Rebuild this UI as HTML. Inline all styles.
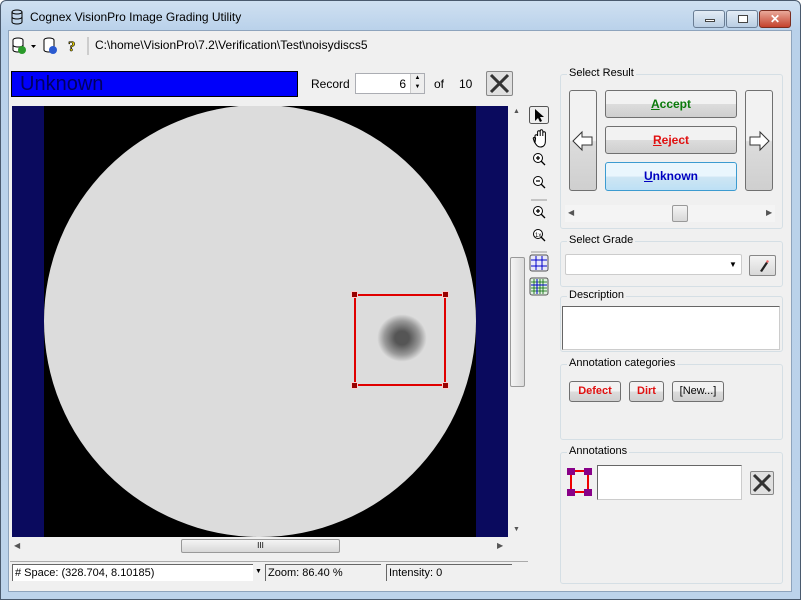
<!DOCTYPE html>
<html><head><meta charset="utf-8"><style>
*{box-sizing:border-box;margin:0;padding:0}
body{width:807px;height:604px;overflow:hidden;background:#fff;font-family:"Liberation Sans",sans-serif;font-size:11px;color:#000;position:relative}
.abs{position:absolute}
.frame{left:0;top:0;width:801px;height:600px;background:linear-gradient(#cfe0f1,#b9d1ea 30px,#bcd3eb);border:1px solid #4a5a6e;border-radius:6px 6px 0 0}
.client{left:8px;top:30px;width:784px;height:562px;background:#f0f0f0;border:1px solid #8ea4bd}
.grp{position:absolute;border:1px solid #d5dfe5;border-radius:3px}
.grp .lab{position:absolute;left:6px;top:-8px;background:#f0f0f0;padding:0 2px;font-size:11px}
.btn{position:absolute;border:1px solid #707070;border-radius:3px;background:linear-gradient(#f2f2f2 50%,#dcdcdc 51%,#cfcfcf);text-align:center;font-weight:bold;font-size:12px}
.wbtn{position:absolute;top:10px;height:18px;border:1px solid #6a7d94;border-radius:3px;background:linear-gradient(#e3ecf6,#b9cde3)}
</style></head><body>
<div class="abs frame"></div>
<svg class="abs" style="left:10px;top:9px" width="14" height="16"><ellipse cx="7" cy="3" rx="5" ry="2" fill="none" stroke="#000"/><path d="M2 3v10M12 3v10M2 8a5 2 0 0 0 10 0M2 13a5 2 0 0 0 10 0" fill="none" stroke="#000"/></svg>
<div class="abs" style="left:30px;top:10px;font-size:12px">Cognex VisionPro Image Grading Utility</div>
<div class="wbtn" style="left:693px;width:32px"><div class="abs" style="left:11px;top:8px;width:10px;height:3px;background:#fff;border:1px solid #444"></div></div>
<div class="wbtn" style="left:726px;width:32px"><div class="abs" style="left:11px;top:4px;width:10px;height:8px;border:1px solid #444;background:#fff"></div></div>
<div class="wbtn" style="left:759px;width:32px;background:linear-gradient(#e9a99a,#c4412c);border-color:#7a2d20;color:#fff;font-weight:bold;font-size:12px;text-align:center;line-height:16px">✕</div>
<div class="abs client"></div>
<!-- toolbar -->
<svg class="abs" style="left:11px;top:37px" width="80" height="18">
<ellipse cx="7" cy="3" rx="5" ry="2" fill="#fff" stroke="#000"/><path d="M2 3v10a5 2 0 0 0 10 0V3" fill="#fff" stroke="#000"/><path d="M2 8a5 2 0 0 0 10 0" fill="none" stroke="#000"/><circle cx="11" cy="13" r="4" fill="#2a9a2a"/>
<path d="M20 8h5l-2.5 3z" fill="#000"/>
<ellipse cx="38" cy="3" rx="5" ry="2" fill="#fff" stroke="#000"/><path d="M33 3v10a5 2 0 0 0 10 0V3" fill="#fff" stroke="#000"/><circle cx="42" cy="13" r="4" fill="#2a5ad0"/>
<text x="57" y="14" font-size="15" font-weight="bold" fill="#e8d000" stroke="#000" stroke-width=".6" font-family="Liberation Serif">?</text>
<line x1="77" y1="0" x2="77" y2="18" stroke="#aaa"/></svg>
<div class="abs" style="left:95px;top:38px;font-size:12px">C:\home\VisionPro\7.2\Verification\Test\noisydiscs5</div>
<!-- unknown bar -->
<div class="abs" style="left:11px;top:71px;width:287px;height:26px;background:#0000fa;border:1px solid #000;font-size:20px;color:#000060;padding-left:8px;line-height:24px">Unknown</div>
<div class="abs" style="left:311px;top:77px;font-size:12px">Record</div>
<div class="abs" style="left:355px;top:73px;width:70px;height:21px;background:#fff;border:1px solid #abadb3;text-align:right;padding:3px 18px 0 0;font-size:12px">6</div>
<div class="abs" style="left:410px;top:74px;width:14px;height:19px;background:#eee;border-left:1px solid #ccc;font-size:6px;text-align:center;line-height:9px">▲<br>▼</div>
<div class="abs" style="left:434px;top:77px;font-size:12px">of</div>
<div class="abs" style="left:459px;top:77px;font-size:12px">10</div>
<div class="abs" style="left:486px;top:71px;width:27px;height:25px;border:1px solid #888;border-radius:2px;background:#e0e0e0"><svg width="25" height="23"><path d="M4 3L21 20M21 3L4 20" stroke="#333" stroke-width="3"/></svg></div>
<!-- image -->
<div class="abs" style="left:12px;top:106px;width:496px;height:431px;background:#000;overflow:hidden">
<div class="abs" style="left:0;top:0;width:32px;height:431px;background:#0a0a5e"></div>
<div class="abs" style="left:464px;top:0;width:32px;height:431px;background:#0a0a5e"></div>
<div class="abs" style="left:32px;top:-1px;width:432px;height:432px;border-radius:50%;background:#dcdcdc"></div>
<div class="abs" style="left:342px;top:188px;width:92px;height:92px;border:2px solid #e00000"></div>
<div class="abs" style="left:365px;top:208px;width:50px;height:48px;border-radius:50%;background:radial-gradient(#555 20%,#999 50%,#dcdcdc 70%)"></div>
<div class="abs" style="left:339px;top:185px;width:7px;height:7px;background:#900;border:1px solid #fcc"></div>
<div class="abs" style="left:430px;top:185px;width:7px;height:7px;background:#900;border:1px solid #fcc"></div>
<div class="abs" style="left:339px;top:276px;width:7px;height:7px;background:#900;border:1px solid #fcc"></div>
<div class="abs" style="left:430px;top:276px;width:7px;height:7px;background:#900;border:1px solid #fcc"></div>
</div>
<!-- vscroll -->
<div class="abs" style="left:509px;top:106px;width:17px;height:431px;background:#f0f0f0"></div>
<div class="abs" style="left:510px;top:257px;width:15px;height:130px;border:1px solid #999;border-radius:2px;background:linear-gradient(90deg,#f4f4f4,#dcdcdc)"></div>
<div class="abs" style="left:513px;top:108px;font-size:7px;color:#555">▲</div>
<div class="abs" style="left:513px;top:526px;font-size:7px;color:#555">▼</div>
<!-- hscroll -->
<div class="abs" style="left:12px;top:538px;width:496px;height:16px;background:#f0f0f0"></div>
<div class="abs" style="left:181px;top:539px;width:159px;height:14px;border:1px solid #999;border-radius:2px;background:linear-gradient(#f4f4f4,#d8d8d8);text-align:center;font-size:8px;line-height:12px">III</div>
<div class="abs" style="left:14px;top:541px;font-size:8px;color:#555">◀</div>
<div class="abs" style="left:497px;top:541px;font-size:8px;color:#555">▶</div>
<!-- tool column -->
<svg class="abs" style="left:528px;top:104px" width="24" height="195">
<rect x="1.5" y="2.5" width="19" height="17" rx="2" fill="#eee" stroke="#555"/><path d="M7 5v12l3-3 2 4 2-1-2-4h4z" fill="#000"/>
<path d="M7 39v-7a1.3 1.3 0 0 1 2.6 0v-4a1.3 1.3 0 0 1 2.6 0v4-5a1.3 1.3 0 0 1 2.6 0v5-3a1.3 1.3 0 0 1 2.6 0v8c0 4-2 6-5 6s-4-2-6-5l-1-3a1.2 1.2 0 0 1 2.2-1z" fill="#fff" stroke="#000"/>
<circle cx="10" cy="54" r="4.5" fill="#fff" stroke="#000"/><path d="M13 57l4 4M8 54h4M10 52v4" stroke="#000" stroke-width="1.3"/>
<circle cx="10" cy="77" r="4.5" fill="#fff" stroke="#000"/><path d="M13 80l4 4M8 77h4" stroke="#000" stroke-width="1.3"/>
<line x1="3" y1="96" x2="19" y2="96" stroke="#999"/>
<circle cx="10" cy="107" r="4.5" fill="#fff" stroke="#000"/><path d="M13 110l4 4M8 107h4M10 105v4" stroke="#000" stroke-width="1.3"/>
<circle cx="10" cy="130" r="4.5" fill="#fff" stroke="#000"/><path d="M13 133l4 4" stroke="#000" stroke-width="1.3"/><text x="7" y="133" font-size="6">1x</text>
<line x1="3" y1="148" x2="19" y2="148" stroke="#999"/>
<rect x="2" y="151" width="18" height="16" rx="2" fill="#e8e8f8" stroke="#555"/><path d="M8 152v14M14 152v14M3 156h16M3 162h16" stroke="#00c"/>
<rect x="2" y="174" width="18" height="17" rx="2" fill="#e0f0e0" stroke="#555"/><path d="M6 175v15M9 175v15M12 175v15M15 175v15M3 178h16M3 181h16M3 184h16M3 187h16" stroke="#060" stroke-width=".8"/><path d="M3 181h16M9 175v15" stroke="#00c"/>
</svg>
<!-- status -->
<div class="abs" style="left:10px;top:561px;width:518px;height:1px;background:#aaa"></div>
<div class="abs" style="left:12px;top:564px;width:241px;height:17px;background:#fff;border-top:1px solid #666;border-left:1px solid #666;font-size:11px;padding:2px 2px;transform:scaleX(1)">#&nbsp;Space: (328.704, 8.10185)</div>
<div class="abs" style="left:255px;top:568px;font-size:7px">▼</div>
<div class="abs" style="left:265px;top:564px;width:116px;height:17px;border-top:1px solid #666;border-left:1px solid #666;padding:2px 2px">Zoom: 86.40 %</div>
<div class="abs" style="left:386px;top:564px;width:126px;height:17px;border-top:1px solid #666;border-left:1px solid #666;padding:2px 2px">Intensity: 0</div>
<!-- right groups -->
<div class="grp" style="left:560px;top:74px;width:223px;height:155px"><span class="lab">Select Result</span></div>
<div class="btn" style="left:569px;top:90px;width:28px;height:101px"><svg width="26" height="99"><path d="M3 50l9-9v5h10v8H12v5z" fill="#fff" stroke="#333"/></svg></div>
<div class="btn" style="left:745px;top:90px;width:28px;height:101px"><svg width="26" height="99"><path d="M23 50l-9-9v5H4v8h10v5z" fill="#fff" stroke="#333"/></svg></div>
<div class="btn" style="left:605px;top:90px;width:132px;height:28px;line-height:26px;color:#0a7a0a"><u>A</u>ccept</div>
<div class="btn" style="left:605px;top:126px;width:132px;height:28px;line-height:26px;color:#e01010"><u>R</u>eject</div>
<div class="btn" style="left:605px;top:162px;width:132px;height:29px;line-height:27px;color:#0000c0;border-color:#3c9bd0;background:linear-gradient(#eaf6fd 50%,#cfe6f4 51%,#bde0f5)"><u>U</u>nknown</div>
<div class="abs" style="left:565px;top:205px;width:210px;height:17px;background:#f4f4f4"></div>
<div class="abs" style="left:568px;top:208px;font-size:8px;color:#555">◀</div>
<div class="abs" style="left:766px;top:208px;font-size:8px;color:#555">▶</div>
<div class="abs" style="left:672px;top:205px;width:16px;height:17px;border:1px solid #999;border-radius:2px;background:linear-gradient(#f4f4f4,#d8d8d8)"></div>
<div class="grp" style="left:560px;top:241px;width:223px;height:46px"><span class="lab">Select Grade</span></div>
<div class="abs" style="left:565px;top:254px;width:177px;height:21px;background:#fff;border:1px solid #ccc;border-radius:2px"><span class="abs" style="left:163px;top:5px;font-size:8px">▼</span></div>
<div class="abs" style="left:749px;top:255px;width:27px;height:21px;border:1px solid #888;border-radius:2px;background:linear-gradient(#f4f4f4,#d8d8d8)"><svg width="25" height="19"><path d="M10 15l6-9 2 1-6 9z" fill="#222"/><path d="M16 6l1-2 2 1-1 2z" fill="#e66"/></svg></div>
<div class="grp" style="left:560px;top:296px;width:223px;height:56px"><span class="lab">Description</span></div>
<div class="abs" style="left:562px;top:306px;width:218px;height:44px;background:#fff;border:1px solid #666;border-right-color:#ccc;border-bottom-color:#ccc"></div>
<div class="grp" style="left:560px;top:364px;width:223px;height:76px"><span class="lab">Annotation categories</span></div>
<div class="btn" style="left:569px;top:381px;width:52px;height:21px;line-height:19px;color:#e01010;font-size:11px">Defect</div>
<div class="btn" style="left:629px;top:381px;width:35px;height:21px;line-height:19px;color:#e01010;font-size:11px">Dirt</div>
<div class="btn" style="left:672px;top:381px;width:52px;height:21px;line-height:19px;font-weight:normal;font-size:11px">[New...]</div>
<div class="grp" style="left:560px;top:452px;width:223px;height:132px"><span class="lab">Annotations</span></div>
<svg class="abs" style="left:567px;top:467px" width="27" height="32"><rect x="4" y="4" width="17" height="21" fill="none" stroke="#e00" stroke-width="2"/><rect x="0" y="1" width="8" height="7" fill="#808"/><rect x="17" y="1" width="8" height="7" fill="#808"/><rect x="0" y="22" width="8" height="7" fill="#808"/><rect x="17" y="22" width="8" height="7" fill="#808"/></svg>
<div class="abs" style="left:597px;top:465px;width:145px;height:35px;background:#fff;border:1px solid #666;border-right-color:#ccc;border-bottom-color:#ccc"></div>
<div class="abs" style="left:750px;top:471px;width:24px;height:24px;border:1px solid #888;border-radius:2px;background:#e0e0e0"><svg width="22" height="22"><path d="M3 3L19 19M19 3L3 19" stroke="#333" stroke-width="3"/></svg></div>
</body></html>
